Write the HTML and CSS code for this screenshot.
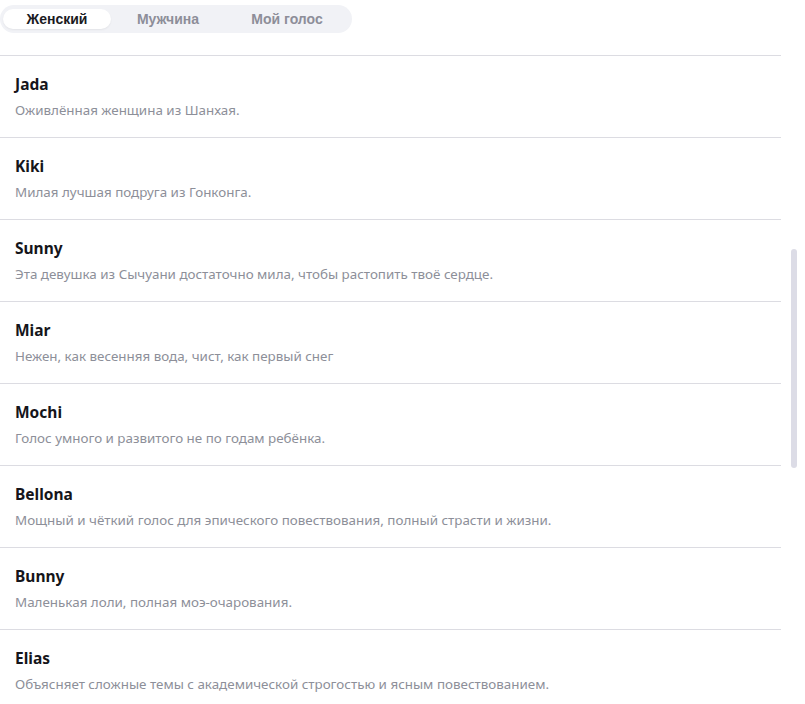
FILE: index.html
```html
<!DOCTYPE html>
<html lang="ru">
<head>
  <meta charset="UTF-8" />
  <title>Голоса</title>
  <link rel="stylesheet" href="styles.css">
</head>
<body>
  <div class="panel">
    <div class="tabs">
      <div class="tab active">Женский</div>
      <div class="tab">Мужчина</div>
      <div class="tab">Мой голос</div>
    </div>

    <div class="voices">
      <div class="voice">
        <div class="name">Jada</div>
        <div class="desc">Оживлённая женщина из Шанхая.</div>
      </div>
      <div class="voice">
        <div class="name">Kiki</div>
        <div class="desc">Милая лучшая подруга из Гонконга.</div>
      </div>
      <div class="voice">
        <div class="name">Sunny</div>
        <div class="desc">Эта девушка из Сычуани достаточно мила, чтобы растопить твоё сердце.</div>
      </div>
      <div class="voice">
        <div class="name">Miar</div>
        <div class="desc">Нежен, как весенняя вода, чист, как первый снег</div>
      </div>
      <div class="voice">
        <div class="name">Mochi</div>
        <div class="desc">Голос умного и развитого не по годам ребёнка.</div>
      </div>
      <div class="voice">
        <div class="name">Bellona</div>
        <div class="desc">Мощный и чёткий голос для эпического повествования, полный страсти и жизни.</div>
      </div>
      <div class="voice">
        <div class="name">Bunny</div>
        <div class="desc">Маленькая лоли, полная моэ-очарования.</div>
      </div>
      <div class="voice">
        <div class="name">Elias</div>
        <div class="desc">Объясняет сложные темы с академической строгостью и ясным повествованием.</div>
      </div>
    </div>

    <div class="scroll-thumb"></div>
  </div>
</body>
</html>
```

FILE: styles.css
```css
html, body {
  margin: 0;
  background: #fff;
  overflow: hidden;
}
.panel {
  position: relative;
  height: 704px;
  font-family: "Noto Sans", sans-serif;
}
.tabs {
  display: flex;
  width: 346px;
  height: 28px;
  margin-top: 5px;
  padding: 0 3px;
  box-sizing: content-box;
  align-items: center;
  background: #f1f2f6;
  border-radius: 14px;
  font-family: "Liberation Sans", Arial, sans-serif;
  font-weight: bold;
  font-size: 14px;
}
.tab {
  height: 20px;
  line-height: 20px;
  text-align: center;
  color: #8d8e99;
  border-radius: 10px;
}
.tab:nth-child(1) { width: 108px; }
.tab:nth-child(2) { width: 114px; }
.tab:nth-child(3) { width: 124px; }
.tab.active {
  background: #fff;
  color: #1b1b1f;
  box-shadow: 0 1px 2px rgba(0, 0, 0, 0.06);
}
.voices {
  width: 781px;
  margin-top: 22px;
  border-top: 1px solid #dcdce2;
}
.voice {
  height: 81px;
  padding: 0 15px;
  border-bottom: 1px solid #dcdce2;
  box-sizing: content-box;
}
.name {
  padding-top: 17px;
  font-size: 15.5px;
  font-weight: bold;
  color: #15151a;
  line-height: 22px;
}
.desc {
  margin-top: 6px;
  font-size: 13.4px;
  color: #8d8f99;
  line-height: 18px;
}
.scroll-thumb {
  position: absolute;
  left: 791px;
  top: 244px;
  width: 6px;
  height: 219px;
  background: #dcdce6;
  border-radius: 3px;
}
```
